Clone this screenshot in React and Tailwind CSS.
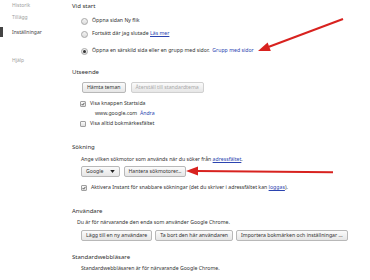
import React from "react";

const Radio = ({ checked }) => (
  <span className="w-[7px] h-[7px] rounded-full border border-[#a8a8a8] bg-gradient-to-b from-[#f4f4f4] to-[#dcdcdc] flex items-center justify-center shrink-0">
    {checked && <span className="w-[3px] h-[3px] rounded-full bg-[#333]" />}
  </span>
);

const Check = ({ checked }) => (
  <span className="w-[6px] h-[6px] border border-[#a0a0a0] bg-gradient-to-b from-[#fafafa] to-[#e0e0e0] flex items-center justify-center shrink-0 rounded-[1px]">
    {checked && (
      <svg viewBox="0 0 6 6" className="w-[6px] h-[6px]">
        <path d="M1 3.2 L2.5 4.7 L5.2 1.2" fill="none" stroke="#222" strokeWidth="1.1" />
      </svg>
    )}
  </span>
);

const Btn = ({ children, disabled, className = "" }) => (
  <span
    className={`h-[11px] px-[4px] flex items-center border border-[#b8b8b8] rounded-[2px] bg-gradient-to-b from-[#fbfbfb] to-[#e6e6e6] text-[5.2px] leading-none whitespace-nowrap ${
      disabled ? "text-[#aaa] border-[#d0d0d0]" : "text-[#333]"
    } ${className}`}
  >
    {children}
  </span>
);

const Heading = ({ children, className = "" }) => (
  <div className={`h-[12px] flex items-center text-[6px] text-[#303030] leading-none ${className}`}>{children}</div>
);

const Row = ({ children, className = "" }) => (
  <div className={`h-[10px] flex items-center text-[5.2px] text-[#333] leading-none whitespace-nowrap ${className}`}>{children}</div>
);

const Link = ({ children, underline }) => (
  <span className={`text-[#2b44b0] ${underline ? "underline" : ""}`}>{children}</span>
);

export default function App() {
  return (
    <div className="relative w-[370px] h-[280px] bg-white overflow-hidden font-['Noto_Sans',sans-serif]">
      <div className="flex">
        {/* Sidebar */}
        <div className="w-[72px] shrink-0 flex flex-col text-[5px] leading-none">
          <div className="h-[10px] flex items-center pl-[12px] text-[#a0a0a0]">Historik</div>
          <div className="h-[10px] mt-[2px] flex items-center pl-[12px] text-[#a0a0a0]">Tillägg</div>
          <div className="h-[10px] mt-[5px] flex items-center relative pl-[12px] text-[#444]">
            <span className="absolute left-0 top-[0px] w-[3px] h-[10px] bg-[#444]" />
            Inställningar
          </div>
          <div className="h-[10px] mt-[18px] flex items-center pl-[12px] text-[#a0a0a0]">Hjälp</div>
        </div>

        {/* Main */}
        <div className="flex-1 flex flex-col pr-[2px]">
          <Heading>Vid start</Heading>
          <Row className="mt-[4px] pl-[9px] gap-[4px]">
            <Radio />
            <span>Öppna sidan Ny flik</span>
          </Row>
          <Row className="mt-[3px] pl-[9px] gap-[4px]">
            <Radio />
            <span>
              Fortsätt där jag slutade <Link underline>Läs mer</Link>
            </span>
          </Row>
          <Row className="mt-[7px] pl-[9px] gap-[4px]">
            <Radio checked />
            <span>
              Öppna en särskild sida eller en grupp med sidor.&nbsp;&nbsp;<Link>Grupp med sidor</Link>
            </span>
          </Row>

          <Heading className="mt-[10px]">Utseende</Heading>
          <div className="mt-[4px] pl-[10px] flex gap-[5px]">
            <Btn>Hämta teman</Btn>
            <Btn disabled>Återställ till standardtema</Btn>
          </div>
          <Row className="mt-[6px] pl-[8px] gap-[4px]">
            <Check checked />
            <span>Visa knappen Startsida</span>
          </Row>
          <Row className="pl-[23px]">
            <span>
              www.google.com&nbsp;&nbsp;<Link>Ändra</Link>
            </span>
          </Row>
          <Row className="pl-[8px] gap-[4px]">
            <Check />
            <span>Visa alltid bokmärkesfältet</span>
          </Row>

          <Heading className="mt-[12px]">Sökning</Heading>
          <Row className="mt-[2px] pl-[9px]">
            <span>
              Ange vilken sökmotor som används när du söker från <Link underline>adressfältet</Link>.
            </span>
          </Row>
          <div className="mt-[1px] pl-[9px] flex gap-[4px]">
            <Btn className="gap-[6px]">
              Google
              <svg viewBox="0 0 6 4" className="w-[5px] h-[3px]">
                <path d="M0 0 H6 L3 4 Z" fill="#222" />
              </svg>
            </Btn>
            <Btn>Hantera sökmotorer...</Btn>
          </div>
          <Row className="mt-[6px] pl-[9px] gap-[4px]">
            <Check checked />
            <span>
              Aktivera Instant för snabbare sökningar (det du skriver i adressfältet kan <Link underline>loggas</Link>).
            </span>
          </Row>

          <Heading className="mt-[12px]">Användare</Heading>
          <Row className="mt-[1px] pl-[5px]">
            <span>Du är för närvarande den enda som använder Google Chrome.</span>
          </Row>
          <div className="mt-[2px] pl-[9px] flex gap-[3px]">
            <Btn>Lägg till en ny användare</Btn>
            <Btn>Ta bort den här användaren</Btn>
            <Btn>Importera bokmärken och inställningar ...</Btn>
          </div>

          <Heading className="mt-[10px]">Standardwebbläsare</Heading>
          <Row className="mt-[1px] pl-[9px]">
            <span>Standardwebbläsaren är för närvarande Google Chrome.</span>
          </Row>
          <div className="mt-[6px] h-px bg-[#eeeeee]" />
        </div>
      </div>

      {/* Annotation arrows */}
      <svg className="absolute inset-0 pointer-events-none" width="370" height="280" viewBox="0 0 370 280">
        <line x1="343" y1="19" x2="269" y2="46.8" stroke="#d8221f" strokeWidth="2" />
        <polygon points="258,51 270.8,51 267.6,42.6" fill="#d8221f" />
        <line x1="197" y1="171" x2="333" y2="172.2" stroke="#d8221f" strokeWidth="2" />
        <polygon points="186,171 198,166.5 198,175.5" fill="#d8221f" />
      </svg>
    </div>
  );
}
